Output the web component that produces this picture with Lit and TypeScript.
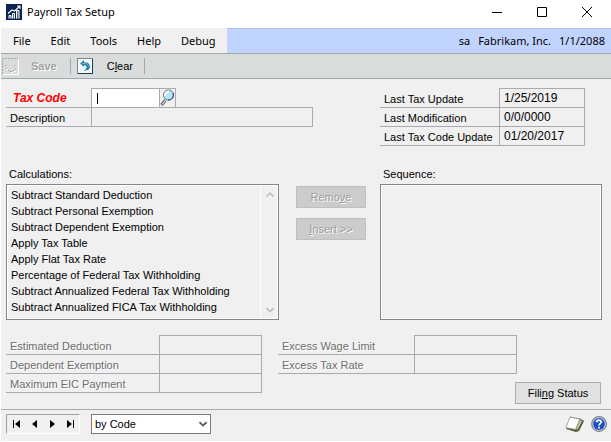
import { LitElement, html, svg, css } from "lit";
import { customElement, property } from "lit/decorators.js";

const CALCULATIONS = [
  "Subtract Standard Deduction",
  "Subtract Personal Exemption",
  "Subtract Dependent Exemption",
  "Apply Tax Table",
  "Apply Flat Tax Rate",
  "Percentage of Federal Tax Withholding",
  "Subtract Annualized Federal Tax Withholding",
  "Subtract Annualized FICA Tax Withholding",
];

type Field = { id: string; label: string; value: string };

const UPDATES: Field[] = [
  { id: "last-update", label: "Last Tax Update", value: "1/25/2019" },
  { id: "last-modification", label: "Last Modification", value: "0/0/0000" },
  { id: "last-code-update", label: "Last Tax Code Update", value: "01/20/2017" },
];
const AMOUNTS: Field[] = [
  { id: "deduction", label: "Estimated Deduction", value: "" },
  { id: "exemption", label: "Dependent Exemption", value: "" },
  { id: "eic", label: "Maximum EIC Payment", value: "" },
];
const EXCESS: Field[] = [
  { id: "wage-limit", label: "Excess Wage Limit", value: "" },
  { id: "tax-rate", label: "Excess Tax Rate", value: "" },
];

const appIcon = svg`<svg width="16" height="16" viewBox="0 0 16 16">
  <rect width="16" height="16" fill="#0b2350"/>
  <path d="M3 14.500V11.500H5V14.500M6.500 14.500V9.500H8.500V14.500M10.500 14.500V6.500H13V14.500" fill="#5c6c8e" stroke="#fff" stroke-width="1"/>
  <path d="M2 9.500L6 6L8.500 7L13.500 2.500M11 2H14V5" fill="none" stroke="#fff" stroke-width="1.100"/>
</svg>`;
const saveIcon = svg`<svg width="17" height="17" viewBox="0 0 17 17" fill="none">
  <path d="M1.500 16.500H16.500V1.500" stroke="#fff"/>
  <path d="M.5 16V.5H16" stroke="#a8aaaa" stroke-dasharray="2 1"/>
  <path d="M3 7.500H4M12 7.500H13M4 10.500H5M6 12.500H7M8 13.500H10M11 12.500H12M13 10.500H14" stroke="#a0a2a2"/>
  <path d="M4 11.500H6M9 14.500H11M12 13.500H14" stroke="#fff"/>
</svg>`;
const undoIcon = svg`<svg width="16" height="16" viewBox="0 0 16 16">
  <rect x=".5" y=".5" width="15" height="15" fill="#f5f8fa" stroke="#7b8794"/>
  <path d="M15.500 1V15.500H1" fill="none" stroke="#183d5c"/>
  <path d="M3 5.500L7 2V4.200C11 4 13 6 13 8.500C13 11.500 10 13 6 12.500C8.500 12 10 10.500 9.500 8.800C9 7.500 8 7.200 7 7.200V9Z" fill="#2183aa"/>
  <path d="M5 5.500H8C10 5.500 11.500 7 11.500 8.500" fill="none" stroke="#65b9d1"/>
</svg>`;
const lensIcon = svg`<svg width="15" height="18" viewBox="0 0 15 18">
  <path d="M5.500 11L1.500 16" stroke="#555" stroke-width="3"/>
  <path d="M6 10.500L2 15.500" stroke="#eee" stroke-width="1.200"/>
  <circle cx="8.500" cy="6" r="5" fill="#b5e4fa" stroke="#6d7386"/>
  <path d="M5 7A4 4 0 0 1 9 2.500" fill="none" stroke="#fff" stroke-width="2"/>
  <path d="M13 4A5 5 0 0 1 8 11" fill="none" stroke="#243a78"/>
</svg>`;
const chevron = (up: boolean) => svg`<svg width="8" height="6" viewBox="0 0 8 6">
  <path d=${up ? "M.5 4.500L4 1.200L7.500 4.500" : "M.5 1.200L4 4.500L7.500 1.200"} fill="none" stroke="currentColor" stroke-width="1.700"/>
</svg>`;
const noteIcon = svg`<svg width="20" height="17" viewBox="0 0 20 17">
  <path d="M14 2L19 5L14 15L11 16L1 13L2 12L10 13Z" fill="#55563a"/>
  <path d="M5 1L15 3L10.500 13.500L1 11.500Z" fill="#fff" stroke="#8d9487" stroke-width=".8"/>
  <path d="M15 4L17 5L13 13L11 14Z" fill="#c7c9ad"/>
  <path d="M5 1L15 3" stroke="#6f8f86" stroke-dasharray="1 1"/>
</svg>`;
const helpIcon = svg`<svg width="16" height="16" viewBox="0 0 16 16">
  <circle cx="8" cy="8" r="7.300" fill="#e2e6ee" stroke="#777d8a" stroke-width="1.300"/>
  <circle cx="8" cy="8" r="5.900" fill="#1c4fc0"/>
  <path d="M3.500 6A5 5 0 0 1 12.500 6Z" fill="#4b7fe0"/>
  <path d="M5.800 6.300C5.800 3.300 10.300 3.500 10.200 6C10.100 7.600 8 7.600 8 9.500" fill="none" stroke="#fff" stroke-width="1.700"/>
  <rect x="7.100" y="10.700" width="1.800" height="1.800" fill="#fff"/>
</svg>`;

@customElement("field-grid")
export class FieldGrid extends LitElement {
  @property({ attribute: false }) fields: Field[] = [];
  @property({ type: Boolean, reflect: true }) disabled = false;

  static styles = css`
    :host {
      display: block;
    }
    :host([disabled]) {
      color: #6d6d6d;
      text-shadow: 1px 1px #fff;
    }
    .row {
      display: flex;
      height: 18px;
      border-bottom: 1px solid #a9a9b1;
    }
    .row:first-of-type .value {
      margin-top: -1px;
      border-top-width: 1px;
    }
    .label {
      flex: 0 0 var(--label, 119px);
      padding-left: 4px;
      box-sizing: border-box;
      line-height: 20px;
      white-space: nowrap;
    }
    .value {
      flex: 1;
      min-width: 0;
      box-sizing: border-box;
      margin: 0;
      padding: 0 4px;
      border: 0 solid #a9a9b1;
      border-width: 0 1px;
      border-radius: 0;
      background: transparent;
      font: inherit;
      font-size: 12px;
      color: inherit;
      outline: 0;
    }
  `;

  render() {
    return this.fields.map(
      (f) => html`<div class="row">
        <label class="label" for=${f.id}>${f.label}</label>
        <input class="value" id=${f.id} .value=${f.value} readonly ?disabled=${this.disabled} />
      </div>`
    );
  }
}

@customElement("app-root")
export class AppRoot extends LitElement {
  static styles = css`
    :host {
      display: flex;
      flex-direction: column;
      min-height: 100vh;
      box-sizing: border-box;
      padding: 0 0 1px 1px;
      background: #fff;
      color: #000;
      font: 11px/16px "Liberation Sans", Arial, sans-serif;
    }
    svg {
      display: block;
      flex: none;
    }
    button {
      font: inherit;
      color: inherit;
      margin: 0;
      padding: 0;
      border: 0;
      border-radius: 0;
      background: none;
    }
    u {
      text-underline-offset: 1px;
    }
    .titlebar {
      display: flex;
      align-items: center;
      height: 28px;
      padding: 0 2px 4px 5px;
      box-sizing: border-box;
      font-family: "Noto Sans", "Open Sans", sans-serif;
    }
    .title {
      flex: 1;
      margin: 0 0 0 5px;
      font-size: 11px;
      font-weight: 400;
    }
    .caption {
      display: grid;
      place-items: center;
      width: 45px;
      height: 24px;
    }
    .menubar {
      display: flex;
      align-items: center;
      height: 25px;
      border-bottom: 1px solid #a3a7b0;
      background: #c0d4fd;
      font-family: "Noto Sans", "Open Sans", sans-serif;
      box-shadow: inset 0 1px #b0c2e6;
    }
    .menus {
      display: flex;
      gap: 20px;
      width: 226px;
      height: 25px;
      box-sizing: border-box;
      padding-left: 12px;
      background: #f0f0f0;
    }
    .session {
      display: flex;
      gap: 8px;
      margin-left: auto;
      padding-right: 6px;
    }
    .toolbar {
      display: flex;
      align-items: center;
      height: 24px;
      border-bottom: 1px solid #a3a7b0;
      background: #dadcdc;
    }
    .tool {
      display: flex;
      align-items: center;
      gap: 12px;
      padding-left: 1px;
    }
    .tool.clear {
      gap: 14px;
      padding: 0 11px 0 6px;
    }
    .tool:disabled {
      color: #a0a2a2;
      font-weight: 700;
      text-shadow: 1px 1px #fff;
      padding-right: 13px;
    }
    .sep {
      width: 1px;
      height: 16px;
      background: #a3a7b0;
    }
    .page {
      flex: 1;
      padding: 9px 9px 0 5px;
      background: #f0f0f0;
    }
    .split {
      display: grid;
      grid-template-columns: minmax(0, 374fr) minmax(0, 222fr);
    }
    .identity {
      margin-right: 67px;
    }
    .updates {
      margin: 1px 17px 0 0;
    }
    .line {
      display: flex;
      height: 18px;
      border-bottom: 1px solid #a9a9b1;
    }
    .line.first {
      height: 19px;
    }
    .name {
      flex: 0 0 85px;
      box-sizing: border-box;
      padding-left: 4px;
      line-height: 20px;
    }
    .name.required {
      padding-left: 7px;
      color: #f00;
      font-size: 12px;
      font-weight: 700;
      font-style: italic;
    }
    .entry {
      box-sizing: border-box;
      width: 68px;
      margin: 0;
      padding: 0 5px;
      border: 1px solid #a9a9b1;
      border-width: 1px 0 0 1px;
      border-radius: 0;
      background: #fff;
      font: inherit;
      outline: 0;
    }
    .entry:placeholder-shown:focus {
      caret-color: transparent;
      background: linear-gradient(#000, #000) 5px 4px / 1px 11px no-repeat #fff;
    }
    .entry.wide {
      flex: 1;
      min-width: 0;
      border-width: 0 1px;
      background: transparent;
    }
    .lookup {
      border: 1px solid #a9a9b1;
      border-bottom: 0;
    }
    .lists {
      margin-top: 20px;
    }
    .calc {
      display: grid;
      grid-template-columns: minmax(0, 1fr) 70px;
      column-gap: 17px;
      margin-right: 14px;
    }
    .caption-text {
      display: block;
      height: 18px;
      padding-left: 3px;
    }
    .box {
      display: flex;
      height: 134px;
      border: 1px solid #82868f;
      box-shadow: inset 0 0 0 1px #fff;
    }
    .options {
      flex: 1;
      min-width: 0;
      margin: 1px;
      padding: 3px 0 0 1px;
      border: 0;
      outline: 0;
      border-radius: 0;
      overflow: hidden;
      background: transparent;
      font: inherit;
      color: inherit;
      scrollbar-width: none;
    }
    .options option {
      height: 16px;
      min-height: 16px;
      box-sizing: border-box;
      line-height: 16px;
      padding: 0 2px;
    }
    .scroll {
      display: flex;
      flex-direction: column;
      justify-content: space-between;
      align-items: center;
      width: 17px;
      padding: 7px 0 6px;
      border-left: 1px solid #fff;
      color: #bfbfbf;
    }
    .moves {
      display: flex;
      flex-direction: column;
      gap: 10px;
      padding-top: 20px;
    }
    .push {
      height: 22px;
      border: 1px solid #adadad;
      background: #e1e1e1;
    }
    .push:disabled {
      border-color: #bfbfbf;
      background: #ccc;
      color: #9d9d9d;
      text-shadow: 1px 1px #fff;
    }
    .amounts {
      display: grid;
      grid-template-columns: minmax(0, 256fr) minmax(0, 239fr);
      column-gap: 16px;
      margin: 16px 85px 0 0;
    }
    .deductions {
      --label: 153px;
    }
    .excess {
      --label: 136px;
    }
    .actions {
      display: flex;
      justify-content: flex-end;
      margin: -11px 1px 5px 0;
    }
    .filing {
      width: 86px;
    }
    .footer {
      display: flex;
      align-items: center;
      padding: 4px 4px 7px 5px;
      border-top: 1px solid #a9a9b1;
      background: #f0f0f0;
    }
    .nav {
      display: flex;
      justify-content: space-around;
      width: 74px;
      height: 20px;
      box-sizing: border-box;
      border: 1px solid #fff;
      border-color: #a0a0a0 #fff #fff #a0a0a0;
    }
    .sort {
      display: grid;
      align-items: center;
      width: 120px;
      margin: 0 auto 0 11px;
    }
    .sort > * {
      grid-area: 1 / 1;
    }
    .sort svg {
      justify-self: end;
      margin-right: 4px;
      color: #555;
      pointer-events: none;
    }
    .by {
      appearance: none;
      height: 20px;
      padding: 0 3px;
      border: 1px solid #7a7a7a;
      border-radius: 0;
      background: #fff;
      font: inherit;
      color: inherit;
    }
    .foot-icon {
      margin-left: 6px;
    }
  `;

  private nav(label: string, d: string) {
    return html`<button aria-label=${label}>
      <svg width="9" height="10" viewBox="0 0 9 10"><path d=${d} /></svg>
    </button>`;
  }

  render() {
    return html`
      <header class="titlebar">
        ${appIcon}
        <h1 class="title">Payroll Tax Setup</h1>
        <button class="caption" aria-label="Minimize">
          <svg width="10" height="10"><path d="M0 5.500H10" stroke="#000" /></svg>
        </button>
        <button class="caption" aria-label="Maximize">
          <svg width="10" height="10"><path d="M.5.5H9.500V9.500H.5Z" fill="none" stroke="#000" /></svg>
        </button>
        <button class="caption" aria-label="Close">
          <svg width="10" height="10"><path d="M0 0L10 10M10 0L0 10" stroke="#000" /></svg>
        </button>
      </header>
      <nav class="menubar">
        <div class="menus">
          ${["File", "Edit", "Tools", "Help", "Debug"].map((m) => html`<button>${m}</button>`)}
        </div>
        <div class="session"><span>sa</span><span>Fabrikam, Inc.</span><span>1/1/2088</span></div>
      </nav>
      <div class="toolbar">
        <button class="tool" disabled>${saveIcon}<span>Save</span></button>
        <span class="sep"></span>
        <button class="tool clear">${undoIcon}<span>C<u>l</u>ear</span></button>
        <span class="sep"></span>
      </div>
      <main class="page">
        <div class="split">
          <div class="identity">
            <div class="line first">
              <label class="name required" for="code">Tax Code</label>
              <input class="entry" id="code" placeholder=" " autofocus />
              <button class="lookup" aria-label="Lookup">${lensIcon}</button>
            </div>
            <div class="line">
              <label class="name" for="description">Description</label>
              <input class="entry wide" id="description" readonly />
            </div>
          </div>
          <field-grid class="updates" .fields=${UPDATES}></field-grid>
        </div>
        <div class="split lists">
          <div class="calc">
            <div>
              <label class="caption-text" for="calculations">Calculations:</label>
              <div class="box">
                <select class="options" id="calculations" size="8">
                  ${CALCULATIONS.map((c) => html`<option>${c}</option>`)}
                </select>
                <div class="scroll">${chevron(true)}${chevron(false)}</div>
              </div>
            </div>
            <div class="moves">
              <button class="push" disabled>Remo<u>v</u>e</button>
              <button class="push" disabled><u>I</u>nsert &gt;&gt;</button>
            </div>
          </div>
          <div>
            <label class="caption-text" for="sequence">Sequence:</label>
            <div class="box"><select class="options" id="sequence" size="8"></select></div>
          </div>
        </div>
        <div class="amounts">
          <field-grid class="deductions" .fields=${AMOUNTS} disabled></field-grid>
          <field-grid class="excess" .fields=${EXCESS} disabled></field-grid>
        </div>
        <div class="actions"><button class="push filing">Fili<u>n</u>g Status</button></div>
      </main>
      <footer class="footer">
        <div class="nav">
          ${this.nav("First", "M1 1H2V9H1ZM8 1V9L3 5Z")}
          ${this.nav("Previous", "M7 1V9L2 5Z")}
          ${this.nav("Next", "M2 1V9L7 5Z")}
          ${this.nav("Last", "M1 1V9L6 5ZM7 1H8V9H7Z")}
        </div>
        <div class="sort">
          <select class="by" aria-label="Sort order"><option>by Code</option></select>
          ${chevron(false)}
        </div>
        <button class="foot-icon" aria-label="Note">${noteIcon}</button>
        <button class="foot-icon" aria-label="Help">${helpIcon}</button>
      </footer>
    `;
  }

  firstUpdated() {
    this.renderRoot.querySelector<HTMLInputElement>("#code")?.focus();
  }
}
